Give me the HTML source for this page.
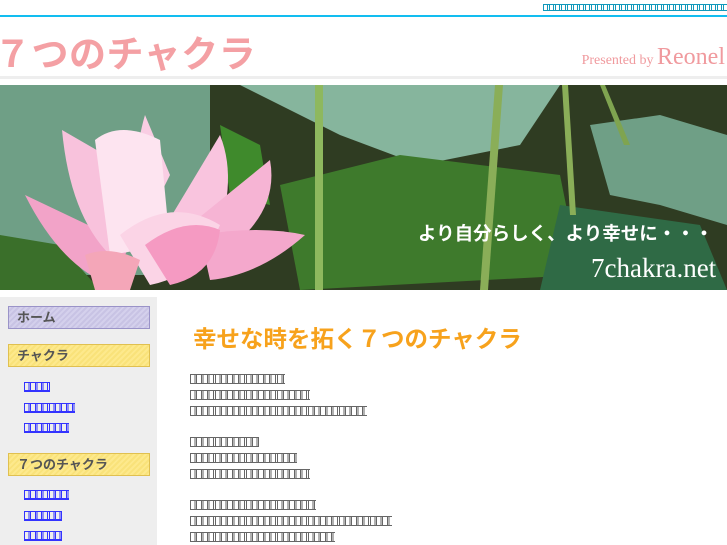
<!DOCTYPE html>
<html><head><meta charset="utf-8"><style>
body{margin:0;width:727px;height:545px;overflow:hidden;background:#fff;font-family:"Liberation Sans","Noto Sans CJK JP",sans-serif;position:relative}
.a{position:absolute}
.tf{position:absolute;height:8px;border-top:1px solid #666;border-bottom:1px solid #666;background:repeating-linear-gradient(90deg,#666 0 1px,transparent 1px 4.6px,#666 4.6px 5.6px,transparent 5.6px 6.2px)}
.lk{border-color:#33f;background:repeating-linear-gradient(90deg,#33f 0 1px,transparent 1px 4.6px,#33f 4.6px 5.6px,transparent 5.6px 6.2px);height:7px;border-bottom:2px solid #33f}
.mb{position:absolute;left:8px;width:140px;height:21px;font-weight:bold;font-size:13px;color:#555;line-height:21px;padding-left:0;text-indent:8px}
</style></head><body>
<div class="a tf" style="left:543px;top:4px;width:184px;height:5px;border-color:#19b;background:repeating-linear-gradient(90deg,#19b 0 1px,transparent 1px 4px,#19b 4px 5px,transparent 5px 6px)"></div>
<div class="a" style="left:0;top:15px;width:727px;height:2px;background:#12bdf0"></div>
<div class="a" style="left:-6px;top:24px;font-size:37px;font-weight:bold;color:#f4a0a4;letter-spacing:0.5px">７つのチャクラ</div>
<div class="a" style="right:2px;top:44px;font-family:'Liberation Serif',serif;color:#f09a9e;white-space:nowrap"><span style="font-size:14px">Presented by </span><span style="font-size:24px">Reonel</span></div>
<div class="a" style="left:0;top:76px;width:727px;height:3px;background:#eee"></div>
<svg class="a" style="left:0;top:85px" width="727" height="205">
<rect width="727" height="205" fill="#2f3c22"/>
<path d="M0 0H210V150L150 190H0Z" fill="#6f9f86"/>
<path d="M240 0H560L520 60 420 80 340 50Z" fill="#86b59d"/>
<path d="M280 100 400 70 560 90 580 190 300 205Z" fill="#3e7a2c"/>
<path d="M590 40 660 30 727 50V140L660 120 610 110Z" fill="#6f9f86"/>
<path d="M560 120 700 140 727 205H540Z" fill="#2f6a45"/>
<path d="M220 40 260 60 270 120 230 110Z" fill="#3f8a2c"/>
<path d="M0 150 60 160 100 205H0Z" fill="#3a6f2a"/>
<rect x="315" y="0" width="8" height="205" fill="#8eb85e"/>
<path d="M495 0h8l-15 205h-8z" fill="#8aae58"/>
<path d="M562 0h6l8 130-6 0z" fill="#8aae58"/>
<path d="M600 0h5l25 60h-6z" fill="#7fa450"/>
<g>
<path d="M25 110 Q60 180 110 200 L130 160Z" fill="#f2a3c8"/>
<path d="M62 45 Q70 130 110 170 L140 90Z" fill="#f8c2dc"/>
<path d="M145 30 Q130 80 140 150 L170 90Z" fill="#f9cde3"/>
<path d="M95 55 Q120 35 160 55 L170 160 110 170Z" fill="#fde4f0"/>
<path d="M220 50 Q240 100 210 170 L160 150Z" fill="#f9c4de"/>
<path d="M270 75 Q280 130 220 170 L190 140Z" fill="#f6b4d4"/>
<path d="M120 150 Q170 110 220 140 Q200 190 150 200 Z" fill="#fbd4e6"/>
<path d="M200 150 Q260 140 305 150 Q260 190 210 195Z" fill="#f4a8cc"/>
<path d="M145 160 Q185 130 220 145 Q215 190 170 200Z" fill="#f59ac2"/>
<path d="M85 170 Q110 160 140 175 L130 205H95Z" fill="#f4a6b8"/>
</g>
<text x="418" y="155" font-size="18.5" font-weight="bold" fill="#fff" font-family="Liberation Sans,Noto Sans CJK JP,sans-serif">より自分らしく、より幸せに・・・</text>
<text x="591" y="192" font-size="27" fill="#fff" font-family="Liberation Serif,serif">7chakra.net</text>
</svg>
<div class="a" style="left:0;top:297px;width:157px;height:248px;background:#eee"></div>
<div class="mb" style="top:306px;background:repeating-linear-gradient(135deg,#d4d0ec 0 2px,#c8c3e4 2px 4px);border:1px solid #9a93c8">ホーム</div>
<div class="mb" style="top:344px;background:repeating-linear-gradient(135deg,#fde98c 0 2px,#f9e27a 2px 4px);border:1px solid #e0c050">チャクラ</div>
<div class="mb" style="top:453px;background:repeating-linear-gradient(135deg,#fde98c 0 2px,#f9e27a 2px 4px);border:1px solid #e0c050">７つのチャクラ</div>
<div class="tf lk" style="left:24px;top:382px;width:26px"></div>
<div class="tf lk" style="left:24px;top:403px;width:51px"></div>
<div class="tf lk" style="left:24px;top:423px;width:45px"></div>
<div class="tf lk" style="left:24px;top:490px;width:45px"></div>
<div class="tf lk" style="left:24px;top:511px;width:38px"></div>
<div class="tf lk" style="left:24px;top:531px;width:38px"></div>
<div class="a" style="left:193px;top:320px;font-size:23.5px;font-weight:bold;color:#f7a21c;white-space:nowrap">幸せな時を拓く７つのチャクラ</div>
<div class="tf" style="left:190px;top:374px;width:95px"></div>
<div class="tf" style="left:190px;top:390px;width:120px"></div>
<div class="tf" style="left:190px;top:406px;width:177px"></div>
<div class="tf" style="left:190px;top:437px;width:69px"></div>
<div class="tf" style="left:190px;top:453px;width:107px"></div>
<div class="tf" style="left:190px;top:469px;width:120px"></div>
<div class="tf" style="left:190px;top:500px;width:126px"></div>
<div class="tf" style="left:190px;top:516px;width:202px"></div>
<div class="tf" style="left:190px;top:532px;width:145px"></div>
</body></html>
